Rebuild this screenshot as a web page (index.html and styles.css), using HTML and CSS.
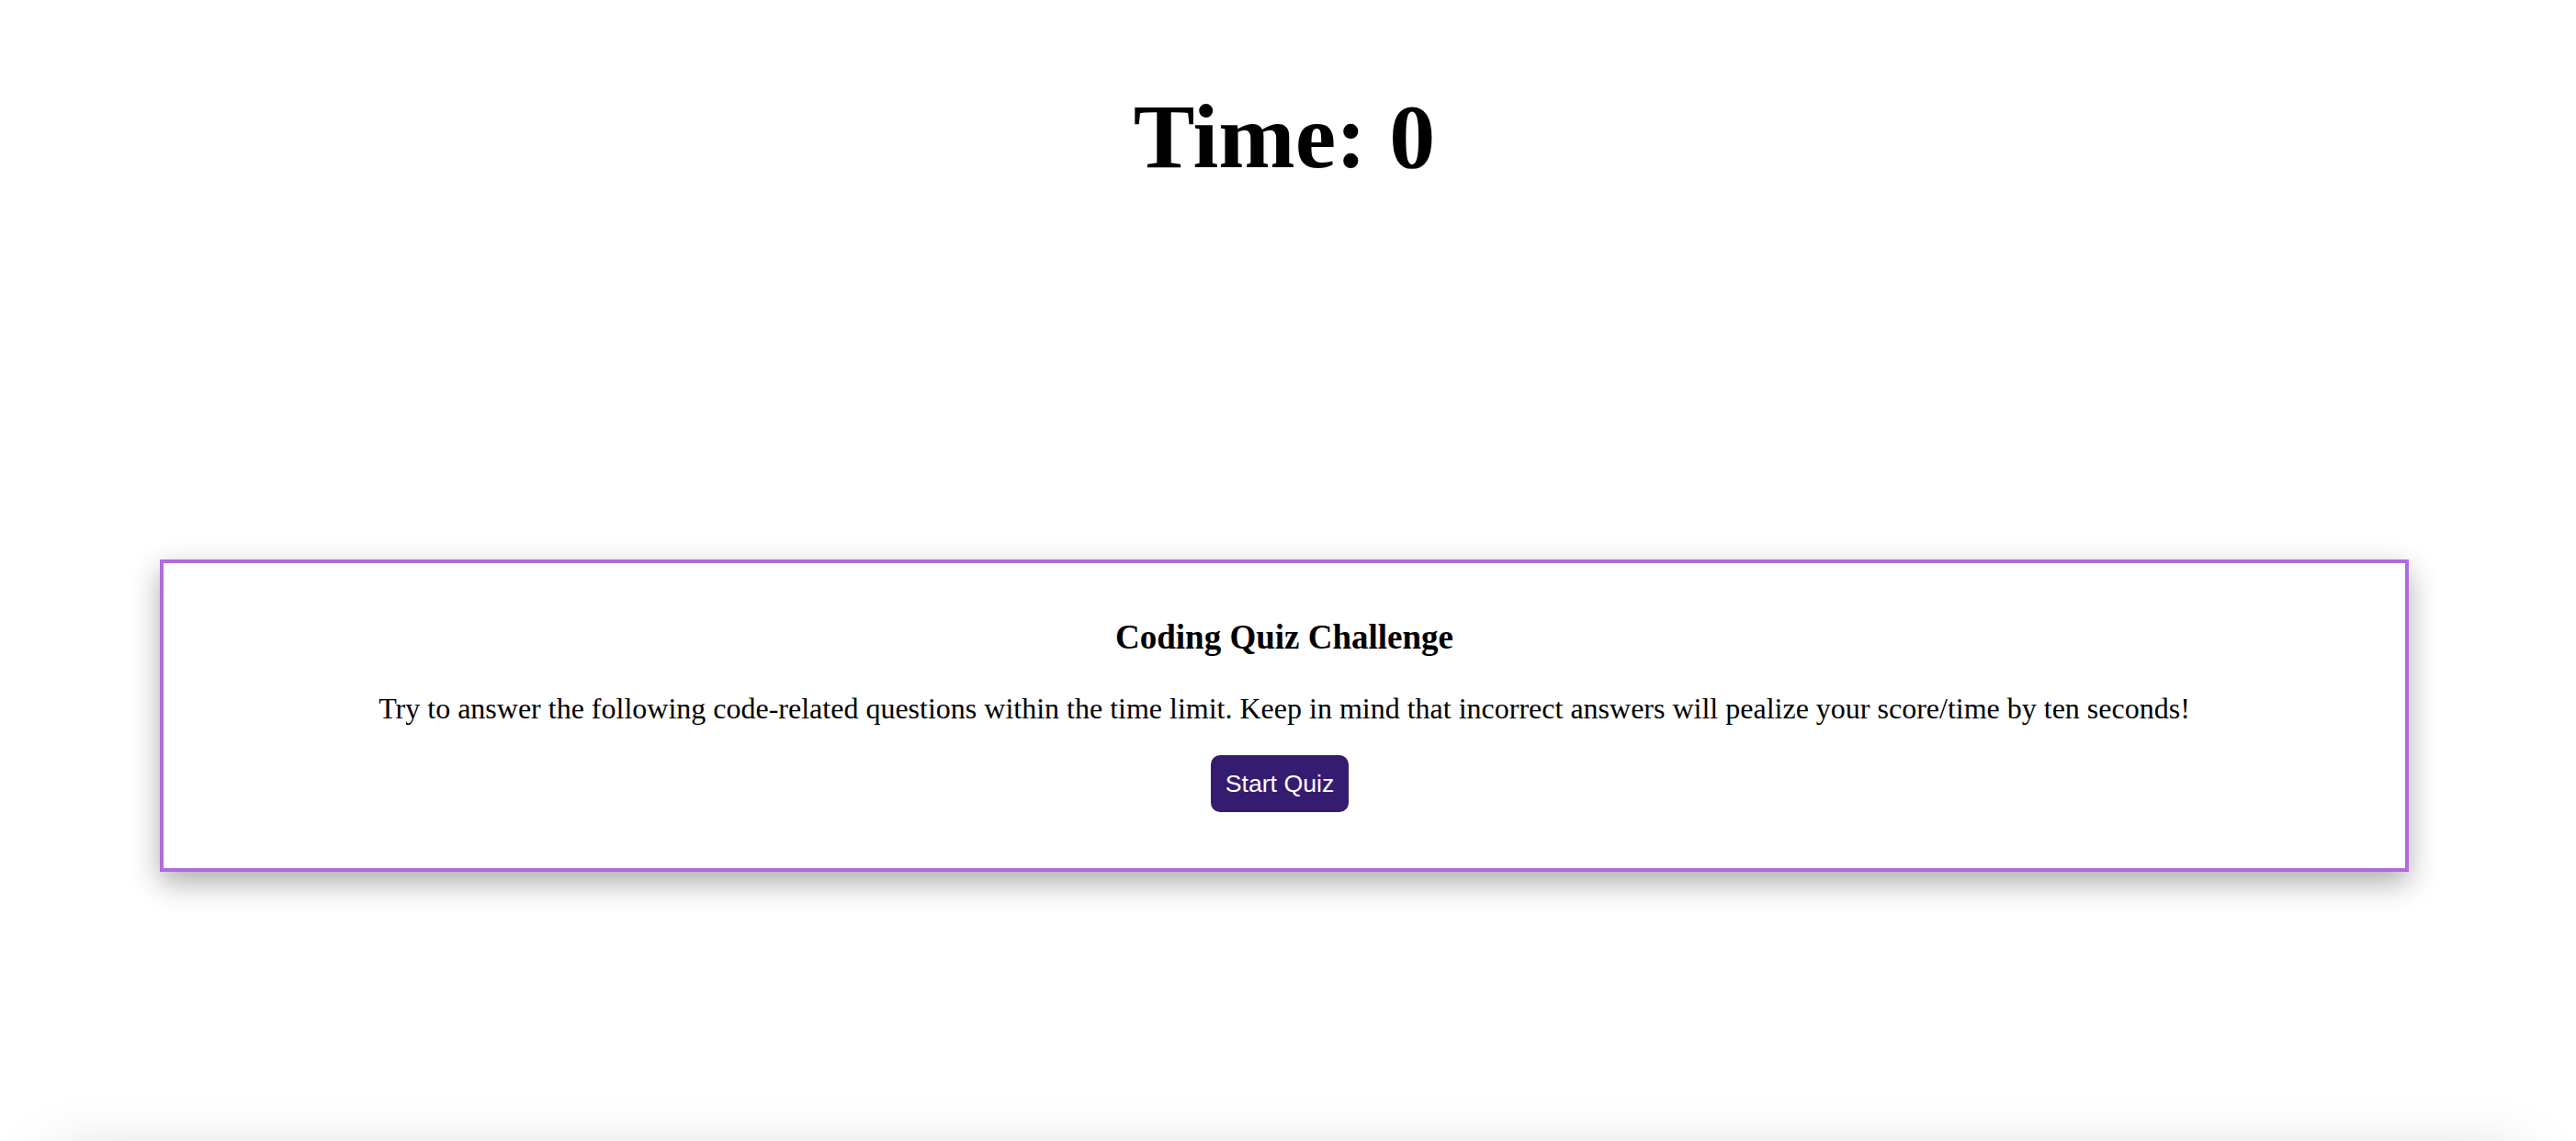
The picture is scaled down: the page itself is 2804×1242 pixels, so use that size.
FILE: index.html
```html
<!DOCTYPE html>
<html lang="en">
<head>
<meta charset="utf-8">
<title>Coding Quiz</title>
<link rel="stylesheet" href="styles.css">
</head>
<body>
<header class="timer-bar">
  <h1 class="timer">Time: <span class="timer-value">0</span></h1>
</header>
<main class="stage">
  <section class="quiz-card">
    <h2 class="quiz-title">Coding Quiz Challenge</h2>
    <p class="quiz-intro">Try to answer the following code-related questions within the time limit. Keep in mind that incorrect answers will pealize your score/time by ten seconds!</p>
    <button class="start-btn" type="button">Start Quiz</button>
  </section>
  <section class="scores-card"></section>
</main>
</body>
</html>
```
FILE: styles.css
```css
html, body {
  margin: 0;
  padding: 0;
  background: #ffffff;
}

body {
  font-family: "Liberation Serif", "Times New Roman", serif;
  color: #000000;
  overflow: hidden;
  height: 1242px;
}

.timer-bar {
  padding-top: 92px;
  text-align: center;
}

.timer {
  margin: 0;
  font-size: 100px;
  line-height: 114px;
  font-weight: bold;
  transform: translateX(-4px);
}

.stage {
  padding-top: 403px;
}

.quiz-card {
  margin: 0 182px 0 174px;
  border: 4px solid #b06be0;
  background: #ffffff;
  box-shadow: 0 12px 30px rgba(0, 0, 0, 0.32);
  text-align: center;
  padding: 59px 40px 61px;
}

.quiz-title {
  margin: 0;
  font-size: 37px;
  line-height: 44px;
  font-weight: bold;
}

.quiz-intro {
  margin: 37px 0 0;
  font-size: 32px;
  line-height: 37px;
}

.start-btn {
  display: block;
  margin: 32px auto 0;
  font-family: "Liberation Sans", Arial, sans-serif;
  font-size: 26.7px;
  line-height: 31px;
  white-space: nowrap;
  color: #ffffff;
  background: #361c70;
  border: none;
  border-radius: 10px;
  padding: 0 16px;
  height: 62px;
  transform: translateX(-5px);
}

.scores-card {
  margin: 316px 60px 0 60px;
  height: 300px;
  background: #ffffff;
  box-shadow: 0 0 70px rgba(0, 0, 0, 0.2);
}
```
